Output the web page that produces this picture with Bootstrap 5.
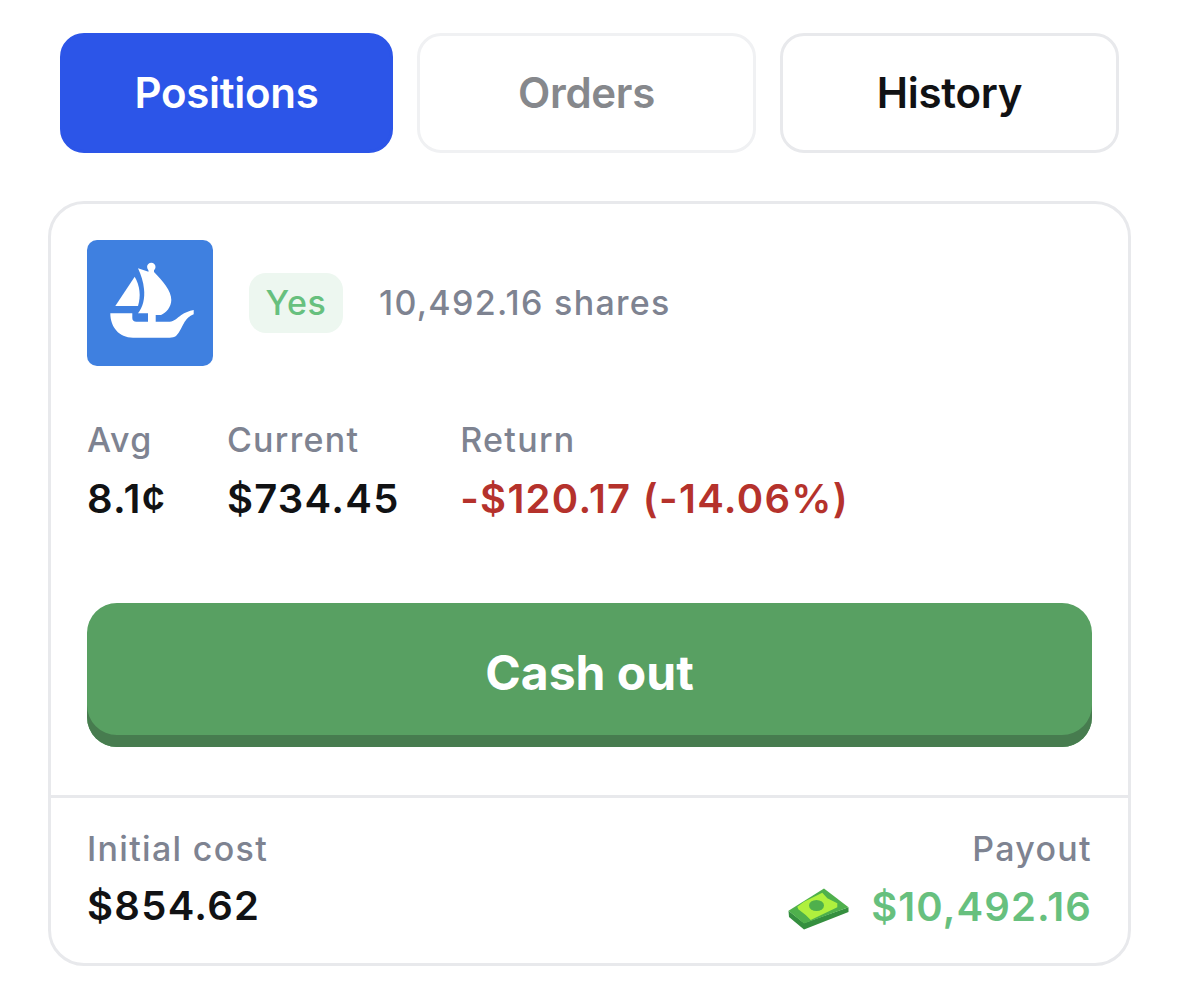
<!DOCTYPE html>
<html lang="en">
<head>
    <meta charset="UTF-8">
    <meta name="viewport" content="width=device-width, initial-scale=1.0">
    <title>Positions</title>
    <link href="https://cdn.jsdelivr.net/npm/bootstrap@5.3.0/dist/css/bootstrap.min.css" rel="stylesheet">
    <style>
        body {
            background-color: #fff;
            font-family: "Inter", "Liberation Sans", sans-serif;
            color: #111214;
        }
        .page-wrap {
            width: 1083px;
            margin-left: 48px;
            padding-top: 33px;
        }
        .tab-row {
            padding: 0 12px;
            gap: 24px;
            margin-bottom: 48px;
        }
        .tab-btn {
            height: 120px;
            flex: 1 1 0;
            border: 3px solid #e8e9ec;
            border-radius: 24px;
            font-size: 42px;
            font-weight: 600;
            line-height: 114px;
            text-align: center;
            letter-spacing: -0.3px;
        }
        .tab-btn.tab-active {
            flex: 0 0 333px;
            background-color: #2c55e8;
            border-color: #2c55e8;
            color: #fff;
        }
        .tab-btn.tab-muted {
            border-color: #f0f1f3;
            color: #86888c;
        }
        .pos-card {
            height: 765px;
            border: 3px solid #e8e9ec;
            border-radius: 36px;
        }
        .pos-top {
            padding: 36px 36px 0;
        }
        .logo-box {
            width: 126px;
            height: 126px;
            border-radius: 10px;
            background-color: #3f80e0;
        }
        .yes-tag {
            width: 94px;
            height: 60px;
            margin-left: 36px;
            margin-right: 36px;
            border-radius: 17px;
            background-color: #edf7f0;
            color: #67c07e;
            font-size: 34px;
            font-weight: 500;
            line-height: 60px;
            text-align: center;
            letter-spacing: 0.6px;
        }
        .share-text, .stat-label {
            color: #7e8391;
            font-size: 34px;
            font-weight: 500;
            line-height: 42px;
            letter-spacing: 1.3px;
        }
        .stat-row {
            gap: 60.5px;
            margin-top: 53px;
        }
        .stat-value {
            font-size: 40px;
            font-weight: 600;
            line-height: 48px;
            margin-top: 12px;
            letter-spacing: 1.3px;
        }
        .stat-row .stat-value {
            margin-top: 14px;
        }
        .stat-loss {
            color: #b5322c;
        }
        .cash-btn {
            height: 144px;
            margin-top: 80px;
            padding-bottom: 4px;
            border-radius: 30px;
            background-color: #58a062;
            box-shadow: inset 0 -12px 0 #477c4f;
            color: #fff;
            font-size: 48px;
            font-weight: 700;
        }
        .pos-foot {
            margin-top: 48px;
            padding: 30px 36px 0 36px;
            border-top: 3px solid #e8e9ec;
        }
        .pay-value {
            color: #67c07e;
            gap: 21px;
            letter-spacing: 1.1px;
        }
        .bill-icon {
            margin-top: 6px;
        }
    </style>
</head>
<body>
    <div class="page-wrap">
        <!-- Tabs -->
        <div class="d-flex tab-row">
            <div class="tab-btn tab-active">Positions</div>
            <div class="tab-btn tab-muted">Orders</div>
            <div class="tab-btn">History</div>
        </div>

        <div class="pos-card">
            <div class="pos-top">
                <div class="d-flex align-items-center">
                    <div class="logo-box">
                        <svg width="126" height="126" viewBox="0 0 126 126" fill="#fff">
                            <path d="M47.7 36.7 L28.3 66 H51 C54 56 53 46 47.7 36.7 Z"/>
                            <circle cx="64.3" cy="27" r="4.2"/>
                            <path d="M51 28.3 L61.5 31.7 V27 H67 V32 C76 41 84.3 51 84.3 60 C84.3 67 79 73 74 75 H68.7 V82 H61 V73.3 H51 C56 67 58 58 57 49 C56.5 42 54 35 51 28.3 Z"/>
                            <path d="M23.3 73.3 H45.3 V78 C45.3 80.5 47 81.7 49.3 81.7 H82.7 C87 81.7 90 78 94.3 75 C98 72.5 102 71 106.7 70 V74.3 C102 76 100 79 97.7 81.7 C95 86 93 92 89 96 C87.5 97.2 85 97.7 82.7 97.7 H46 C32 97.7 23.3 87 23.3 73.3 Z"/>
                        </svg>
                    </div>
                    <div class="yes-tag">Yes</div>
                    <div class="share-text">10,492.16 shares</div>
                </div>

                <div class="d-flex stat-row">
                    <div>
                        <div class="stat-label">Avg</div>
                        <div class="stat-value">8.1¢</div>
                    </div>
                    <div>
                        <div class="stat-label">Current</div>
                        <div class="stat-value">$734.45</div>
                    </div>
                    <div>
                        <div class="stat-label">Return</div>
                        <div class="stat-value stat-loss">-$120.17 (-14.06%)</div>
                    </div>
                </div>

                <div class="cash-btn d-flex align-items-center justify-content-center">Cash out</div>
            </div>

            <div class="pos-foot d-flex justify-content-between">
                <div>
                    <div class="stat-label">Initial cost</div>
                    <div class="stat-value">$854.62</div>
                </div>
                <div class="text-end">
                    <div class="stat-label">Payout</div>
                    <div class="stat-value pay-value d-flex align-items-center">
                        <svg class="bill-icon" width="62" height="44" viewBox="0 0 62 44">
                            <path d="M0.5 22.7 L16 35 L60.5 19.3 V24 L16 41.5 L1 29 Z" fill="#358f3f"/>
                            <path d="M0.5 22.7 L36 0.5 L60.5 19.3 L16 35.5 Z" fill="#4fb04c"/>
                            <path d="M9.3 18.7 L16 13.7 L34.3 4.7 L39.3 10.3 L49.3 15.3 V19.3 L22.7 32 L17.7 27 L10.3 21.3 Z" fill="#aff03e"/>
                            <ellipse cx="28.5" cy="17.5" rx="7.5" ry="5.5" fill="#4fb04c"/>
                        </svg>
                        <span>$10,492.16</span>
                    </div>
                </div>
            </div>
        </div>
    </div>

    <script src="https://cdn.jsdelivr.net/npm/bootstrap@5.3.0/dist/js/bootstrap.bundle.min.js"></script>
</body>
</html>
